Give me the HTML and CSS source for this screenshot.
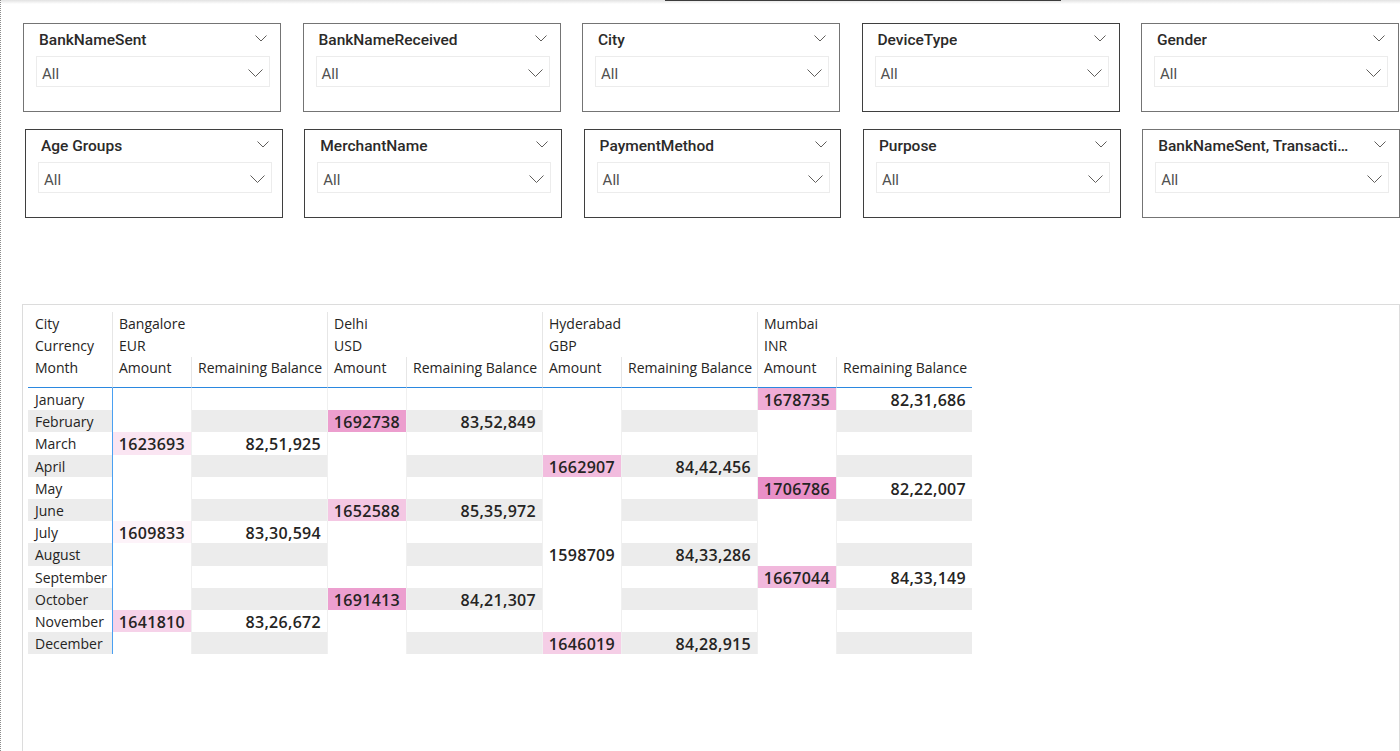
FILE: index.html
```html
<!DOCTYPE html>
<html lang="en">
<head>
<meta charset="utf-8">
<title>Transactions report</title>
<link rel="stylesheet" href="styles.css">
</head>
<body>
<div class="page">
  <div class="topbar"><div class="topbar-thumb"></div></div>

  <div class="slicers">
    <div class="slicer-row">
      <div class="slicer">
        <div class="slicer-head"><span class="slicer-title">BankNameSent</span><svg class="chev-sm" width="12" height="7" viewBox="0 0 12 7"><path d="M0.5 0.5 L6 6 L11.5 0.5"/></svg></div>
        <div class="dropdown"><span class="dd-value">All</span><svg class="chev-lg" width="15" height="8" viewBox="0 0 15 8"><path d="M0.5 0.5 L7.5 7.5 L14.5 0.5"/></svg></div>
      </div>
      <div class="slicer">
        <div class="slicer-head"><span class="slicer-title">BankNameReceived</span><svg class="chev-sm" width="12" height="7" viewBox="0 0 12 7"><path d="M0.5 0.5 L6 6 L11.5 0.5"/></svg></div>
        <div class="dropdown"><span class="dd-value">All</span><svg class="chev-lg" width="15" height="8" viewBox="0 0 15 8"><path d="M0.5 0.5 L7.5 7.5 L14.5 0.5"/></svg></div>
      </div>
      <div class="slicer">
        <div class="slicer-head"><span class="slicer-title">City</span><svg class="chev-sm" width="12" height="7" viewBox="0 0 12 7"><path d="M0.5 0.5 L6 6 L11.5 0.5"/></svg></div>
        <div class="dropdown"><span class="dd-value">All</span><svg class="chev-lg" width="15" height="8" viewBox="0 0 15 8"><path d="M0.5 0.5 L7.5 7.5 L14.5 0.5"/></svg></div>
      </div>
      <div class="slicer dark">
        <div class="slicer-head"><span class="slicer-title">DeviceType</span><svg class="chev-sm" width="12" height="7" viewBox="0 0 12 7"><path d="M0.5 0.5 L6 6 L11.5 0.5"/></svg></div>
        <div class="dropdown"><span class="dd-value">All</span><svg class="chev-lg" width="15" height="8" viewBox="0 0 15 8"><path d="M0.5 0.5 L7.5 7.5 L14.5 0.5"/></svg></div>
      </div>
      <div class="slicer">
        <div class="slicer-head"><span class="slicer-title">Gender</span><svg class="chev-sm" width="12" height="7" viewBox="0 0 12 7"><path d="M0.5 0.5 L6 6 L11.5 0.5"/></svg></div>
        <div class="dropdown"><span class="dd-value">All</span><svg class="chev-lg" width="15" height="8" viewBox="0 0 15 8"><path d="M0.5 0.5 L7.5 7.5 L14.5 0.5"/></svg></div>
      </div>
    </div>

    <div class="slicer-row second">
      <div class="slicer dark">
        <div class="slicer-head"><span class="slicer-title">Age Groups</span><svg class="chev-sm" width="12" height="7" viewBox="0 0 12 7"><path d="M0.5 0.5 L6 6 L11.5 0.5"/></svg></div>
        <div class="dropdown"><span class="dd-value">All</span><svg class="chev-lg" width="15" height="8" viewBox="0 0 15 8"><path d="M0.5 0.5 L7.5 7.5 L14.5 0.5"/></svg></div>
      </div>
      <div class="slicer dark">
        <div class="slicer-head"><span class="slicer-title">MerchantName</span><svg class="chev-sm" width="12" height="7" viewBox="0 0 12 7"><path d="M0.5 0.5 L6 6 L11.5 0.5"/></svg></div>
        <div class="dropdown"><span class="dd-value">All</span><svg class="chev-lg" width="15" height="8" viewBox="0 0 15 8"><path d="M0.5 0.5 L7.5 7.5 L14.5 0.5"/></svg></div>
      </div>
      <div class="slicer dark">
        <div class="slicer-head"><span class="slicer-title">PaymentMethod</span><svg class="chev-sm" width="12" height="7" viewBox="0 0 12 7"><path d="M0.5 0.5 L6 6 L11.5 0.5"/></svg></div>
        <div class="dropdown"><span class="dd-value">All</span><svg class="chev-lg" width="15" height="8" viewBox="0 0 15 8"><path d="M0.5 0.5 L7.5 7.5 L14.5 0.5"/></svg></div>
      </div>
      <div class="slicer dark">
        <div class="slicer-head"><span class="slicer-title">Purpose</span><svg class="chev-sm" width="12" height="7" viewBox="0 0 12 7"><path d="M0.5 0.5 L6 6 L11.5 0.5"/></svg></div>
        <div class="dropdown"><span class="dd-value">All</span><svg class="chev-lg" width="15" height="8" viewBox="0 0 15 8"><path d="M0.5 0.5 L7.5 7.5 L14.5 0.5"/></svg></div>
      </div>
      <div class="slicer">
        <div class="slicer-head"><span class="slicer-title">BankNameSent, Transacti…</span><svg class="chev-sm" width="12" height="7" viewBox="0 0 12 7"><path d="M0.5 0.5 L6 6 L11.5 0.5"/></svg></div>
        <div class="dropdown"><span class="dd-value">All</span><svg class="chev-lg" width="15" height="8" viewBox="0 0 15 8"><path d="M0.5 0.5 L7.5 7.5 L14.5 0.5"/></svg></div>
      </div>
    </div>
  </div>

  <div class="visual">
    <table class="matrix">
      <colgroup>
        <col class="c-rh">
        <col class="c-amt"><col class="c-rb">
        <col class="c-amt"><col class="c-rb">
        <col class="c-amt"><col class="c-rb">
        <col class="c-amt"><col class="c-rb">
      </colgroup>
      <thead>
        <tr class="h1">
          <th class="rh">City</th>
          <th class="grp" colspan="2">Bangalore</th>
          <th class="grp" colspan="2">Delhi</th>
          <th class="grp" colspan="2">Hyderabad</th>
          <th class="grp" colspan="2">Mumbai</th>
        </tr>
        <tr class="h2">
          <th class="rh">Currency</th>
          <th class="grp" colspan="2">EUR</th>
          <th class="grp" colspan="2">USD</th>
          <th class="grp" colspan="2">GBP</th>
          <th class="grp" colspan="2">INR</th>
        </tr>
        <tr class="h3">
          <th class="rh">Month</th>
          <th class="sub">Amount</th><th class="sub">Remaining Balance</th>
          <th class="sub">Amount</th><th class="sub">Remaining Balance</th>
          <th class="sub">Amount</th><th class="sub">Remaining Balance</th>
          <th class="sub">Amount</th><th class="sub">Remaining Balance</th>
        </tr>
      </thead>
      <tbody>
        <tr>
          <td class="rh">January</td>
          <td class="amt first"></td><td class="rb"></td>
          <td class="amt"></td><td class="rb"></td>
          <td class="amt"></td><td class="rb"></td>
          <td class="amt" style="background: rgb(239,172,214)">1678735</td><td class="rb">82,31,686</td>
        </tr>
        <tr class="alt">
          <td class="rh">February</td>
          <td class="amt first"></td><td class="rb"></td>
          <td class="amt" style="background: rgb(236,158,206)">1692738</td><td class="rb">83,52,849</td>
          <td class="amt"></td><td class="rb"></td>
          <td class="amt"></td><td class="rb"></td>
        </tr>
        <tr>
          <td class="rh">March</td>
          <td class="amt first" style="background: rgb(250,229,242)">1623693</td><td class="rb">82,51,925</td>
          <td class="amt"></td><td class="rb"></td>
          <td class="amt"></td><td class="rb"></td>
          <td class="amt"></td><td class="rb"></td>
        </tr>
        <tr class="alt">
          <td class="rh">April</td>
          <td class="amt first"></td><td class="rb"></td>
          <td class="amt"></td><td class="rb"></td>
          <td class="amt" style="background: rgb(242,188,222)">1662907</td><td class="rb">84,42,456</td>
          <td class="amt"></td><td class="rb"></td>
        </tr>
        <tr>
          <td class="rh">May</td>
          <td class="amt first"></td><td class="rb"></td>
          <td class="amt"></td><td class="rb"></td>
          <td class="amt"></td><td class="rb"></td>
          <td class="amt" style="background: rgb(233,143,199)">1706786</td><td class="rb">82,22,007</td>
        </tr>
        <tr class="alt">
          <td class="rh">June</td>
          <td class="amt first"></td><td class="rb"></td>
          <td class="amt" style="background: rgb(244,199,227)">1652588</td><td class="rb">85,35,972</td>
          <td class="amt"></td><td class="rb"></td>
          <td class="amt"></td><td class="rb"></td>
        </tr>
        <tr>
          <td class="rh">July</td>
          <td class="amt first" style="background: rgb(253,243,249)">1609833</td><td class="rb">83,30,594</td>
          <td class="amt"></td><td class="rb"></td>
          <td class="amt"></td><td class="rb"></td>
          <td class="amt"></td><td class="rb"></td>
        </tr>
        <tr class="alt">
          <td class="rh">August</td>
          <td class="amt first"></td><td class="rb"></td>
          <td class="amt"></td><td class="rb"></td>
          <td class="amt" style="background: rgb(255,255,255)">1598709</td><td class="rb">84,33,286</td>
          <td class="amt"></td><td class="rb"></td>
        </tr>
        <tr>
          <td class="rh">September</td>
          <td class="amt first"></td><td class="rb"></td>
          <td class="amt"></td><td class="rb"></td>
          <td class="amt"></td><td class="rb"></td>
          <td class="amt" style="background: rgb(241,184,220)">1667044</td><td class="rb">84,33,149</td>
        </tr>
        <tr class="alt">
          <td class="rh">October</td>
          <td class="amt first"></td><td class="rb"></td>
          <td class="amt" style="background: rgb(236,159,207)">1691413</td><td class="rb">84,21,307</td>
          <td class="amt"></td><td class="rb"></td>
          <td class="amt"></td><td class="rb"></td>
        </tr>
        <tr>
          <td class="rh">November</td>
          <td class="amt first" style="background: rgb(246,210,233)">1641810</td><td class="rb">83,26,672</td>
          <td class="amt"></td><td class="rb"></td>
          <td class="amt"></td><td class="rb"></td>
          <td class="amt"></td><td class="rb"></td>
        </tr>
        <tr class="alt">
          <td class="rh">December</td>
          <td class="amt first"></td><td class="rb"></td>
          <td class="amt"></td><td class="rb"></td>
          <td class="amt" style="background: rgb(245,206,230)">1646019</td><td class="rb">84,28,915</td>
          <td class="amt"></td><td class="rb"></td>
        </tr>
      </tbody>
    </table>
  </div>
</div>
</body>
</html>
```

FILE: styles.css
```css
html, body {
  margin: 0;
  padding: 0;
  background: #ffffff;
}

body {
  font-family: "Open Sans", "Liberation Sans", sans-serif;
  color: #252423;
}

.page {
  height: 751px;
  overflow: hidden;
  border-left: 1px dotted #8c8c8c;
  box-sizing: border-box;
}

.topbar {
  height: 4px;
  background: linear-gradient(#e2e2e2, #ffffff);
}

.topbar-thumb {
  margin-left: 664px;
  width: 396px;
  height: 1px;
  background: #3c3c3c;
}

/* ---------- slicers ---------- */
.slicers {
  padding: 19px 0 0 22px;
  display: flex;
  flex-direction: column;
  gap: 17px;
}

.slicer-row {
  display: flex;
  gap: 21.5px;
}

.slicer-row.second {
  padding-left: 2px;
}

.slicer {
  width: 258px;
  height: 89px;
  box-sizing: border-box;
  border: 1px solid #747474;
  padding: 0 10px 0 12px;
  background: #ffffff;
}

.slicer.dark {
  border-color: #3f3f3f;
}

.slicer-head {
  height: 32px;
  display: flex;
  align-items: center;
  justify-content: space-between;
  padding: 0 3px 0 3px;
}

.slicer-title {
  font-family: "Roboto", "Open Sans", sans-serif;
  font-weight: 500;
  font-size: 15.5px;
  color: #2b2a29;
  white-space: nowrap;
  overflow: hidden;
}

.chev-sm path,
.chev-lg path {
  fill: none;
  stroke: #605e5c;
  stroke-width: 1;
}

.chev-sm {
  flex: none;
  margin-top: -3px;
}

.dropdown {
  height: 31px;
  box-sizing: border-box;
  border: 1px solid #ececec;
  display: flex;
  align-items: center;
  justify-content: space-between;
  padding: 0 6px 0 5px;
}

.dd-value {
  font-family: "Roboto", "Open Sans", sans-serif;
  font-size: 15px;
  color: #505050;
  margin-top: 4px;
}

.chev-lg {
  flex: none;
  margin-top: 2px;
}

/* ---------- matrix visual ---------- */
.visual {
  margin: 86px 0 0 21px;
  width: 1378px;
  height: 470px;
  box-sizing: border-box;
  border: 1px solid #dcdcdc;
  border-bottom: none;
  padding: 7px 0 0 5px;
}

.matrix {
  table-layout: fixed;
  width: 944px;
  border-collapse: separate;
  border-spacing: 0;
  font-size: 14px;
  color: #252423;
}

.c-rh { width: 84px; }
.c-amt { width: 79px; }
.c-rb { width: 136px; }

.matrix th,
.matrix td {
  box-sizing: border-box;
  padding: 0;
  line-height: 22px;
  white-space: nowrap;
  overflow: hidden;
}

.matrix th {
  font-weight: 400;
  text-align: left;
  padding-left: 6px;
}

.matrix th.rh {
  padding-left: 7px;
}

.matrix .h1 th {
  padding-top: 1px;
}

.matrix th.grp {
  border-left: 1px solid #e6e6e6;
}

.matrix th.sub {
  border-left: 1px solid #e6e6e6;
}

.matrix .h3 th {
  padding-bottom: 8px;
  border-bottom: 1px solid #2b88e0;
}

.matrix td {
  height: 22.2px;
  line-height: 21px;
  padding-top: 1px;
}

.matrix td.rh {
  padding-left: 7px;
}

.matrix td.amt,
.matrix td.rb {
  border-left: 1px solid #f0f0f0;
  text-align: right;
  padding-right: 6px;
  padding-top: 2px;
  line-height: 20px;
  font-size: 16px;
  font-weight: 600;
  letter-spacing: 0.3px;
  background: #ffffff;
}

.matrix td.amt.first {
  border-left-color: #4aa0f2;
}

.matrix tr.alt td.rh,
.matrix tr.alt td.rb {
  background: #ececec;
}
```
